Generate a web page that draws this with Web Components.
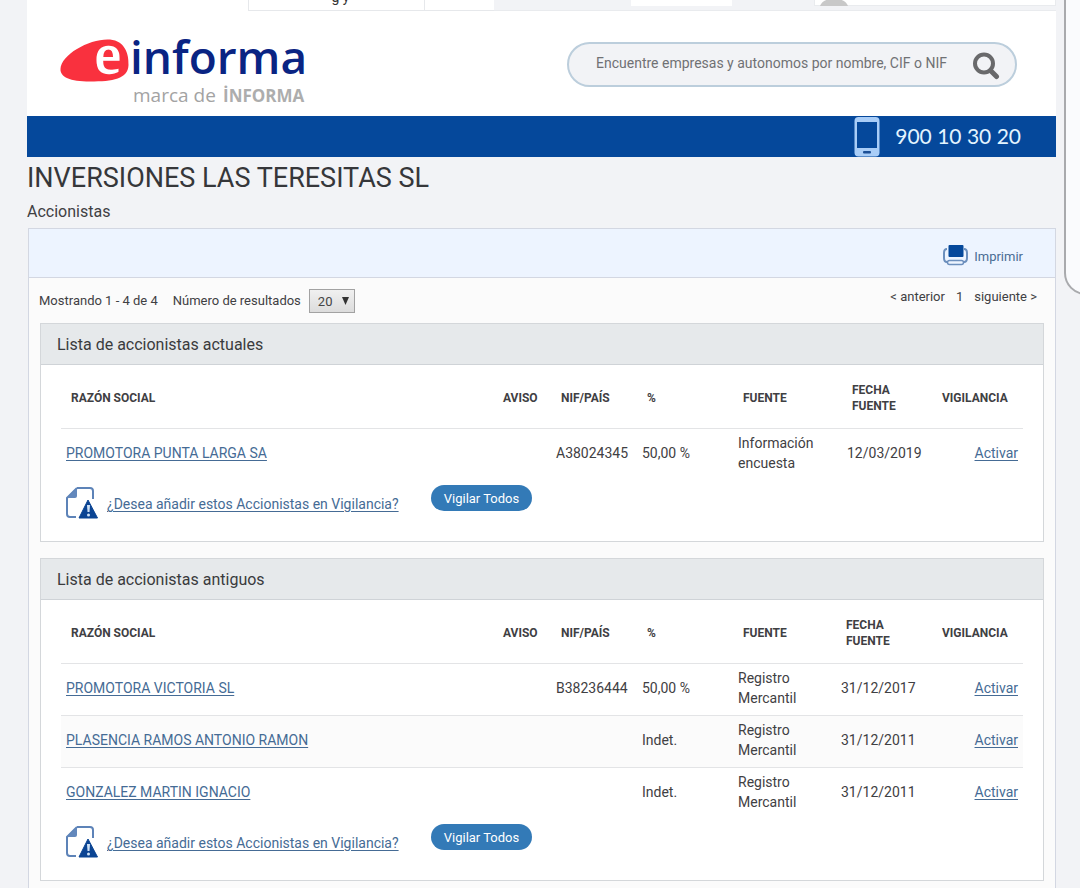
<!DOCTYPE html>
<html lang="es">
<head>
<meta charset="utf-8">
<meta name="viewport" content="width=device-width, initial-scale=1">
<title>INVERSIONES LAS TERESITAS SL - Accionistas</title>
<style>
  body { margin: 0; background: #f2f3f6; color: #3f4043; font-family: Roboto, "Liberation Sans", sans-serif; font-size: 14px; }
</style>
</head>
<body>
<informa-page></informa-page>

<template id="t-page">
  <style>
    :host { display: flex; flex-direction: column; position: relative; min-height: 100vh; box-sizing: border-box; padding: 0 24px 0 27px; overflow: hidden; }
    h1 { margin: 4px 0 0; font-size: 27px; line-height: 34px; font-weight: 400; color: #36373a; }
    h2 { margin: 7px 0 6px; font-size: 16px; line-height: 20px; font-weight: 400; }
    main { display: flex; flex-direction: column; flex: 1; }
    .sheet { flex: 1; display: flex; flex-direction: column; margin-left: 1px; border: 1px solid #d3d7e2; border-bottom: 0; background: #fbfbfb; }
    .lists { display: grid; gap: 16px; padding: 0 11px 8px; }
    .side { position: absolute; top: -20px; right: -24px; width: 36px; height: 311px; border: 2px solid #a9aaad; border-radius: 0 0 0 22px; background: #fafbfd; }
  </style>
  <tab-strip></tab-strip>
  <site-header></site-header>
  <phone-bar>900 10 30 20</phone-bar>
  <main>
    <h1>INVERSIONES LAS TERESITAS SL</h1>
    <h2>Accionistas</h2>
    <div class="sheet">
      <print-bar></print-bar>
      <result-bar></result-bar>
      <div class="lists">
        <holder-list rows="actuales">Lista de accionistas actuales</holder-list>
        <holder-list rows="antiguos">Lista de accionistas antiguos</holder-list>
      </div>
    </div>
  </main>
  <div class="side"></div>
</template>

<template id="t-tabs">
  <style>
    :host { display: flex; height: 11px; overflow: hidden; font-size: 14px; color: #333; }
    div { box-sizing: border-box; }
    .active { width: 221px; background: #fff; }
    .tab { width: 177px; background: #fff; border: solid #e6e8eb; border-width: 0 1px 1px; text-align: center; }
    .tab span { display: block; margin: -10px 0 0 8px; line-height: 14px; }
    .short { width: 69px; background: #fff; border-bottom: 1px solid #e6e8eb; }
    .rest { flex: 1; display: flex; border-bottom: 1px solid #e9ebee; padding-left: 137px; }
    .lang { width: 101px; height: 6px; background: #fff; }
    .user { flex: 1; height: 6px; margin-left: 82px; background: #fff; border: solid #e9ebee; border-width: 0 1px 1px; }
    svg { display: block; margin-left: 5px; }
  </style>
  <div class="active"></div>
  <div class="tab"><span>g y</span></div>
  <div class="short"></div>
  <div class="rest">
    <div class="lang"></div>
    <div class="user"><svg width="28" height="6" viewBox="0 0 28 6" aria-hidden="true"><path d="M0 6C2 1 6-1 14-1S26 1 28 6Z" fill="#c8c8c8"/></svg></div>
  </div>
</template>

<template id="t-header">
  <style>
    :host { display: flex; justify-content: space-between; align-items: flex-start; box-sizing: border-box; height: 105px; padding: 1px 39px 0 32px; background: #fff; }
    .logo { display: block; }
    form { display: flex; align-items: center; justify-content: space-between; box-sizing: border-box; width: 450px; height: 45px; margin-top: 30px; border: 2px solid #bccedc; border-radius: 23px; background: #f2f3f6; padding: 0 14px 0 27px; }
    input { flex: 1; min-width: 0; border: 0; padding: 0 0 3px; outline: 0; background: none; font: 14px Roboto, sans-serif; color: #707174; }
    input::placeholder { color: #707174; opacity: 1; }
    button { border: 0; padding: 0; background: none; display: block; }
    button svg { display: block; }
  </style>
  <a class="logo" href="#" aria-label="einforma, marca de INFORMA">
    <svg width="256" height="96" viewBox="59 12 256 96">
      <path d="M60.500 69C61 54 91 38 110 39.500C125 41 129 54 128.500 65C128 79 113 81.500 90 81.500C70 81.500 60 77 60.500 69Z" fill="#f9313e"/>
      <text x="95" y="73" font-family="Liberation Serif, serif" font-size="58" fill="#fff" stroke="#fff" stroke-width="1.500">e</text>
      <text x="130" y="74" font-family="Open Sans, sans-serif" font-weight="600" font-size="46" fill="#0a2483">informa</text>
      <text x="133" y="102" font-family="Open Sans, sans-serif" font-size="19" fill="#a3a3a3">marca de</text>
      <text x="223" y="102" font-family="Open Sans, sans-serif" font-weight="700" font-size="17" fill="#adadad">İNFORMA</text>
    </svg>
  </a>
  <form role="search" onsubmit="return false">
    <input type="search" aria-label="Buscar" placeholder="Encuentre empresas y autonomos por nombre, CIF o NIF">
    <button aria-label="Buscar"><svg width="30" height="30" viewBox="0 0 30 30" fill="none" stroke="#69696b"><circle cx="13" cy="13.500" r="9" stroke-width="4"/><path d="M19.500 20.500 25.500 26.500" stroke-width="5" stroke-linecap="round"/></svg></button>
  </form>
</template>

<template id="t-phone">
  <style>
    :host { display: flex; justify-content: flex-end; align-items: flex-start; gap: 15px; height: 41px; padding-right: 35px; background: #05489b; color: #e3f4ff; font: 21px/40px Lato, sans-serif; }
    svg { display: block; }
  </style>
  <svg width="26" height="41" viewBox="0 0 26 41" aria-hidden="true"><rect x="0.500" y="1" width="25" height="39.500" rx="4" fill="#a9cdf7"/><path d="M3 6H23V32H3Z" fill="#05489b"/><rect x="9" y="35" width="8" height="2.500" rx="1" fill="#1c4f96"/></svg>
  <span><slot></slot></span>
</template>

<template id="t-print">
  <style>
    :host { display: flex; justify-content: flex-end; align-items: center; box-sizing: border-box; height: 49px; padding: 8px 32px 0 0; border-bottom: 1px solid #d3d7e2; background: #edf4ff; }
    a { display: flex; align-items: center; gap: 6px; font-size: 13px; line-height: 16px; color: #4a6c94; text-decoration: none; }
    svg { display: block; margin-bottom: 4px; }
  </style>
  <a href="#"><svg width="25" height="21" viewBox="0 0 25 21" fill="none" stroke="#6c8fbd" stroke-width="2" aria-hidden="true"><rect x="5.500" y="0" width="15" height="12" rx="1" fill="#05489b" stroke="none"/><path d="M4 4Q1 4 1 8V13Q1 17 4 17M21 4Q24 4 24 8V13Q24 17 21 17"/><rect x="4.500" y="15.500" width="16" height="4" rx="2" stroke-width="1.500"/></svg><span>Imprimir</span></a>
</template>

<template id="t-results">
  <style>
    :host { display: flex; justify-content: space-between; align-items: flex-start; box-sizing: border-box; height: 45px; padding: 11px 18px 0 10px; font-size: 13px; line-height: 24px; }
    .count { display: flex; }
    label { margin: 0 8px 0 15px; }
    .pick { position: relative; }
    select { appearance: none; display: block; box-sizing: border-box; width: 46px; height: 24px; margin: 0; padding: 0 8px; border: 1px solid #a2a2a2; border-radius: 0; background: linear-gradient(#f0f0f0, #dcdcdc); color: #444; font: 13px Roboto, sans-serif; }
    svg { position: absolute; right: 6px; top: 8px; pointer-events: none; }
    nav { display: flex; gap: 11px; line-height: 16px; }
    a { color: inherit; text-decoration: none; }
  </style>
  <div class="count">
    <span>Mostrando 1 - 4 de 4</span>
    <label for="n">Número de resultados</label>
    <div class="pick"><select id="n"><option>20</option><option>50</option></select><svg width="7" height="8" viewBox="0 0 7 8" aria-hidden="true"><path d="M0 0H7L3.500 8Z" fill="#333"/></svg></div>
  </div>
  <nav aria-label="Páginas"><a href="#">&lt; anterior</a><span>1</span><a href="#">siguiente &gt;</a></nav>
</template>

<template id="t-list">
  <style>
    :host { display: block; border: 1px solid #d4d7da; background: #fff; }
    h3 { margin: 0; padding: 0 16px 0; font-size: 16px; line-height: 42px; height: 40px; font-weight: 400; color: #3a3b3d; background: #e6e9eb; border-bottom: 1px solid #cfd3d7; }
    .body { padding: 0 20px; }
    table { width: 100%; table-layout: fixed; border-collapse: separate; border-spacing: 0; }
    col.aviso { width: 58px; } col.nif { width: 86px; } col.pct { width: 96px; } col.fuente { width: 109px; } col.fecha { width: 90px; } col.vig { width: 91px; }
    :host([rows="antiguos"]) col.fuente { width: 103px; }
    :host([rows="antiguos"]) col.fecha { width: 96px; }
    th { height: 63px; box-sizing: border-box; padding: 2px 10px 0; text-align: left; font-size: 12px; line-height: 16px; font-weight: 700; }
    th:nth-child(6) { padding-right: 30px; }
    td { box-sizing: border-box; padding: 4px 5px 7px; font-size: 14px; line-height: 20px; border-top: 1px solid #e3e4e6; white-space: nowrap; }
    td:nth-child(5) { white-space: normal; padding-right: 20px; }
    td:last-child { text-align: right; }
    tr:nth-child(even) td { background: #fbfbfb; }
    a { color: #456b95; text-decoration: underline; text-underline-offset: 2px; }
    .watch { display: flex; align-items: flex-start; height: 56px; padding: 5px 0 0 5px; }
    svg { display: block; margin: 2px 9px 0 0; }
    .watch a { box-sizing: border-box; width: 302px; margin: 9px 22px 0 0; font-size: 14px; line-height: 20px; white-space: nowrap; }
    button { width: 101px; height: 26px; border: 0; border-radius: 13px; padding: 0; background: #337ab7; color: #fff; font: 13px Roboto, sans-serif; }
  </style>
  <h3><slot></slot></h3>
  <div class="body">
    <table>
      <colgroup><col><col class="aviso"><col class="nif"><col class="pct"><col class="fuente"><col class="fecha"><col class="vig"></colgroup>
      <thead><tr><th>RAZÓN SOCIAL</th><th>AVISO</th><th>NIF/PAÍS</th><th>%</th><th>FUENTE</th><th>FECHA FUENTE</th><th>VIGILANCIA</th></tr></thead>
      <tbody></tbody>
    </table>
    <div class="watch">
      <svg width="32" height="32" viewBox="0 0 32 32" aria-hidden="true"><path d="M11 1H24Q27 1 27 4V12M11 1 1 11V27Q1 30 4 30H10" fill="none" stroke="#5d83b8" stroke-width="2"/><path d="M1 11 11 1V9Q11 11 9 11Z" fill="#6388bc"/><path d="M22 13 31.500 31H13Z" fill="#0b4493" stroke="#0b4493" stroke-linejoin="round"/><path d="M21 18H24L23.500 25H21.500Z" fill="#cfe2f7"/><circle cx="22.500" cy="28" r="1.500" fill="#cfe2f7"/></svg>
      <a href="#">¿Desea añadir estos Accionistas en Vigilancia?</a>
      <button type="button">Vigilar Todos</button>
    </div>
  </div>
</template>

<script>
  const holders = {
    actuales: [["PROMOTORA PUNTA LARGA SA", "A38024345", "50,00 %", "Información encuesta", "12/03/2019"]],
    antiguos: [
      ["PROMOTORA VICTORIA SL", "B38236444", "50,00 %", "Registro Mercantil", "31/12/2017"],
      ["PLASENCIA RAMOS ANTONIO RAMON", "", "Indet.", "Registro Mercantil", "31/12/2011"],
      ["GONZALEZ MARTIN IGNACIO", "", "Indet.", "Registro Mercantil", "31/12/2011"]
    ]
  };
  class Templated extends HTMLElement {
    constructor() {
      super();
      this.attachShadow({ mode: "open" }).append(document.getElementById(this.constructor.source).content.cloneNode(true));
    }
  }
  customElements.define("tab-strip", class extends Templated { static source = "t-tabs"; });
  customElements.define("site-header", class extends Templated { static source = "t-header"; });
  customElements.define("phone-bar", class extends Templated { static source = "t-phone"; });
  customElements.define("print-bar", class extends Templated { static source = "t-print"; });
  customElements.define("result-bar", class extends Templated { static source = "t-results"; });
  customElements.define("holder-list", class extends Templated {
    static source = "t-list";
    connectedCallback() {
      this.shadowRoot.querySelector("tbody").innerHTML = holders[this.getAttribute("rows")].map(([name, nif, pct, source, date]) =>
        `<tr><td><a href="#">${name}</a></td><td></td><td>${nif}</td><td>${pct}</td><td>${source}</td><td>${date}</td><td><a href="#">Activar</a></td></tr>`).join("");
    }
  });
  customElements.define("informa-page", class extends Templated { static source = "t-page"; });
</script>
</body>
</html>
